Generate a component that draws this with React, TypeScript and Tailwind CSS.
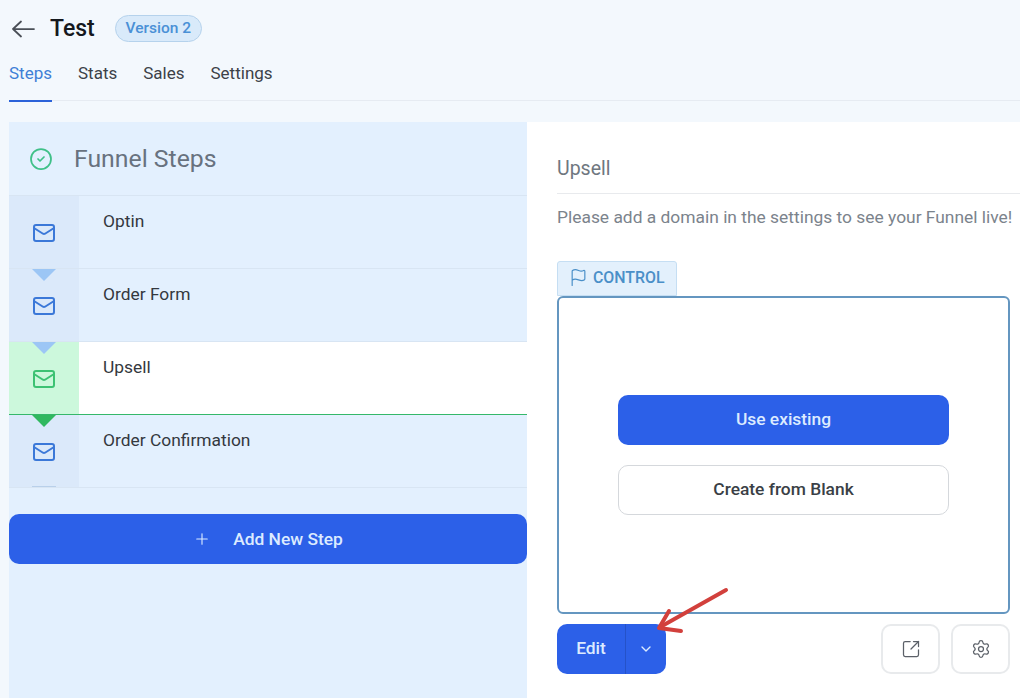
import { CircleCheck, Mail, Flag, Plus, ChevronDown, SquareArrowOutUpRight, Settings } from "lucide-react";

function Step({ label, state, first, last }: { label: string; state?: "active" | "afterActive"; first?: boolean; last?: boolean }) {
  const active = state === "active";
  return (
    <div className={`relative flex h-[73px] ${active ? "bg-white border-b border-[#35b86a]" : "border-b border-[#d8e5f3]"}`}>
      <div className={`flex w-[70px] shrink-0 items-center justify-center pt-[2px] ${active ? "bg-[#ccf8dc]" : "bg-[#dbe9fa]"}`}>
        <Mail size={24} strokeWidth={2} className={active ? "text-[#3cc273]" : "text-[#3b78d8]"} />
      </div>
      <div className="pl-[24px] pt-[14px] text-[17.4px] leading-[22px] text-[#34383e]">{label}</div>
      {!first && (
        <div
          className={`absolute left-[23px] top-0 h-0 w-0 border-x-[12px] border-t-[12px] border-x-transparent ${
            state === "afterActive" ? "border-t-[#30b85f]" : "border-t-[#9cc6f5]"
          }`}
        />
      )}
      {last && <div className="absolute bottom-0 left-[23px] h-[1px] w-[24px] bg-[#b9d0ea]" />}
    </div>
  );
}

function Tab({ label, active }: { label: string; active?: boolean }) {
  return (
    <div className={`-mb-px h-[46px] border-b-2 pt-[5px] text-[17px] leading-[24px] ${active ? "border-[#2b62d9] text-[#3f7fd6]" : "border-transparent text-[#3c4148]"}`}>
      {label}
    </div>
  );
}

export default function App() {
  return (
    <div className="relative flex h-[698px] w-[1020px] flex-col overflow-hidden bg-[#f3f8fd] font-['Roboto',sans-serif]">
      <div className="flex h-[52px] items-center pl-[12px] pt-[5px]">
        <svg width="23" height="18" viewBox="0 0 23 18" fill="none" stroke="#4a4f57" strokeWidth="1.75" strokeLinecap="round" strokeLinejoin="round">
          <path d="M1 9H22M9 1.5L1 9L9 16.5" />
        </svg>
        <span className="ml-[15px] text-[23px] font-medium leading-[28px] text-[#15181d]">Test</span>
        <span className="ml-[20px] flex h-[27px] w-[87px] items-center justify-center rounded-full border border-[#b5d2ec] bg-[#d9eafa] text-[15.5px] font-medium text-[#4a90d6]">
          Version 2
        </span>
      </div>
      <div className="ml-[9px] flex h-[49px] items-start gap-[26px] border-b border-[#e6ebf2] pt-[4px]">
        <Tab label="Steps" active />
        <Tab label="Stats" />
        <Tab label="Sales" />
        <Tab label="Settings" />
      </div>
      <div className="mt-[21px] flex flex-1 pl-[9px]">
        <div className="flex w-[518px] flex-col bg-[#e3f0fe]">
          <div className="flex h-[74px] items-center border-b border-[#d8e5f3] pl-[20px]">
            <CircleCheck size={24} strokeWidth={1.75} className="text-[#3fc088]" />
            <span className="ml-[21px] text-[24.8px] leading-[30px] text-[#68727f]">Funnel Steps</span>
          </div>
          <Step label="Optin" first />
          <Step label="Order Form" />
          <Step label="Upsell" state="active" />
          <Step label="Order Confirmation" state="afterActive" last />
          <button className="mt-[26px] flex h-[50px] items-center justify-center gap-[22px] rounded-[10px] bg-[#2c60e8] text-[17.4px] font-medium text-[#dcebff]">
            <Plus size={18} strokeWidth={1.5} />
            Add New Step
          </button>
        </div>
        <div className="flex flex-1 flex-col bg-white pl-[30px]">
          <div className="flex h-[72px] items-end border-b border-[#e8eaed] pb-[11px] text-[19.5px] leading-[26px] text-[#6f7780]">Upsell</div>
          <div className="whitespace-nowrap pt-[11px] text-[17.4px] leading-[24px] text-[#7b838c]">Please add a domain in the settings to see your Funnel live!</div>
          <div className="mt-[32px] flex h-[35px] w-[120px] items-center gap-[5px] rounded-t-[3px] border border-[#c5def3] bg-[#e3f0fc] pb-[2px] pl-[11px] text-[15.9px] font-medium text-[#4a8fc8]">
            <Flag size={19} strokeWidth={1.5} />
            CONTROL
          </div>
          <div className="flex h-[318px] w-[453px] flex-col items-center rounded-[6px] border-2 border-[#6496c0] pt-[97px]">
            <button className="h-[50px] w-[331px] rounded-[10px] bg-[#2c60e8] pb-[2px] text-[17.4px] font-medium text-[#dcebff]">Use existing</button>
            <button className="mt-[20px] h-[50px] w-[331px] rounded-[10px] border border-[#d5d8dc] bg-white pb-[2px] text-[17.4px] font-medium text-[#3a3f46]">Create from Blank</button>
          </div>
          <div className="mt-[10px] flex w-[453px] items-start justify-between">
            <div className="flex h-[50px] w-[109px] rounded-[10px] bg-[#2c60e8] text-[#dcebff]">
              <div className="flex w-[69px] items-center justify-center border-r border-[#2552c8] pb-[2px] text-[17.4px] font-medium">Edit</div>
              <div className="flex flex-1 items-center justify-center">
                <ChevronDown size={16} strokeWidth={2} />
              </div>
            </div>
            <div className="flex gap-[11px]">
              <div className="flex h-[50px] w-[59px] items-center justify-center rounded-[10px] border-2 border-[#e8eaec] text-[#5b6068]">
                <SquareArrowOutUpRight size={20} strokeWidth={1.5} />
              </div>
              <div className="flex h-[50px] w-[59px] items-center justify-center rounded-[10px] border-2 border-[#e8eaec] text-[#5b6068]">
                <Settings size={20} strokeWidth={1.5} />
              </div>
            </div>
          </div>
        </div>
      </div>
      <svg className="absolute left-[650px] top-[580px]" width="90" height="60" viewBox="0 0 90 60" fill="none">
        <path d="M76 10 L12 46" stroke="#d2403c" strokeWidth="4" strokeLinecap="round" />
        <path d="M19 31 L9 48 L31 51" stroke="#d2403c" strokeWidth="4" strokeLinecap="round" strokeLinejoin="round" />
      </svg>
    </div>
  );
}
